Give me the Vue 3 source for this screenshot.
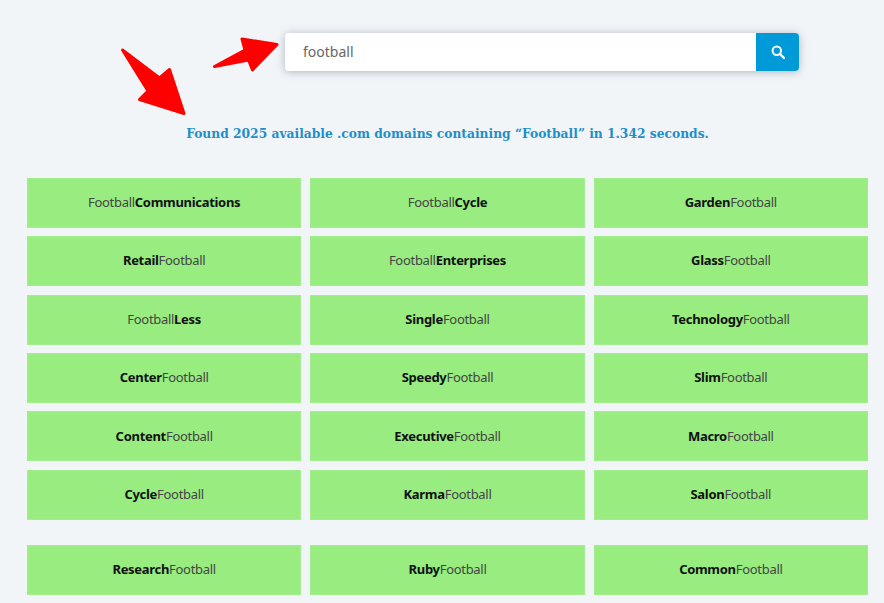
<script setup>
const groups = [
  [
    ['Football', 'Communications', 0], ['Football', 'Cycle', 0], ['Garden', 'Football', 1],
    ['Retail', 'Football', 1], ['Football', 'Enterprises', 0], ['Glass', 'Football', 1],
    ['Football', 'Less', 0], ['Single', 'Football', 1], ['Technology', 'Football', 1],
    ['Center', 'Football', 1], ['Speedy', 'Football', 1], ['Slim', 'Football', 1],
    ['Content', 'Football', 1], ['Executive', 'Football', 1], ['Macro', 'Football', 1],
    ['Cycle', 'Football', 1], ['Karma', 'Football', 1], ['Salon', 'Football', 1]
  ],
  [['Research', 'Football', 1], ['Ruby', 'Football', 1], ['Common', 'Football', 1]]
]
</script>

<template>
  <div class="page">
    <div class="search-row">
      <form class="search" @submit.prevent>
        <input class="field" value="football" aria-label="Search" />
        <button class="go" type="button" aria-label="Search">
          <svg width="14" height="14" viewBox="0 0 14 14" fill="none" stroke="#fff">
            <circle cx="5.8" cy="5.8" r="4.2" stroke-width="2" />
            <path d="M9 9l4 4" stroke-width="2.4" stroke-linecap="round" />
          </svg>
        </button>
      </form>
    </div>
    <h1 class="found">Found 2025 available .com domains containing “Football” in 1.342 seconds.</h1>
    <div class="results">
      <div v-for="(group, g) in groups" :key="g" class="grid">
        <a v-for="(c, i) in group" :key="i" class="card">
          <b v-if="c[2]">{{ c[0] }}</b><span v-else>{{ c[0] }}</span><span v-if="c[2]">{{ c[1] }}</span><b v-else>{{ c[1] }}</b>
        </a>
      </div>
    </div>
    <svg class="arrows" width="884" height="130" viewBox="0 0 884 130" fill="#ff0000" stroke="#ff0000" stroke-width="3" stroke-linejoin="round">
      <polygon points="122.500,50 159.500,78 169.500,69.500 184,113.500 139.500,99.500 148,91" />
      <polygon points="214.500,66.500 245,50 242,39 277,44.500 252.500,70 248.500,60" />
    </svg>
  </div>
</template>

<style scoped>
.page {
  position: relative;
  box-sizing: border-box;
  height: 603px;
  overflow: hidden;
  background: #f2f5f8;
  padding: 33px 16px 0 27px;
}
.search-row {
  display: flex;
  padding-left: 258px;
}
.search {
  display: flex;
  width: 514px;
  height: 38px;
  border-radius: 4px;
  overflow: hidden;
  box-shadow: 0 1px 8px rgba(90, 105, 125, 0.45);
}
.field {
  flex: 1;
  min-width: 0;
  border: 0;
  outline: 0;
  background: #fff;
  padding: 0 18px 2px;
  font: 14px "Noto Sans", sans-serif;
  color: #666;
}
.go {
  display: flex;
  align-items: center;
  justify-content: center;
  width: 43px;
  border: 0;
  padding: 0;
  background: #009ad9;
}
.found {
  margin: 52px 0 0;
  text-align: center;
  font-family: "DejaVu Serif Condensed", "DejaVu Serif", serif;
  font-stretch: condensed;
  font-weight: bold;
  font-size: 13.65px;
  line-height: 20px;
  color: #1d8fc9;
}
.results {
  display: flex;
  flex-direction: column;
  gap: 25px;
  margin-top: 34.8px;
}
.grid {
  display: grid;
  grid-template-columns: repeat(3, 1fr);
  column-gap: 9px;
  row-gap: 8.4px;
}
.card {
  display: flex;
  align-items: center;
  justify-content: center;
  box-sizing: border-box;
  height: 50px;
  padding-bottom: 1.4px;
  background: #98ec80;
  border: 1px solid #a2ee8c;
  font: 13px "Noto Sans", sans-serif;
  letter-spacing: -0.3px;
  color: #444;
}
.card b {
  color: #111;
}
.arrows {
  position: absolute;
  left: 0;
  top: 0;
  pointer-events: none;
}
</style>
